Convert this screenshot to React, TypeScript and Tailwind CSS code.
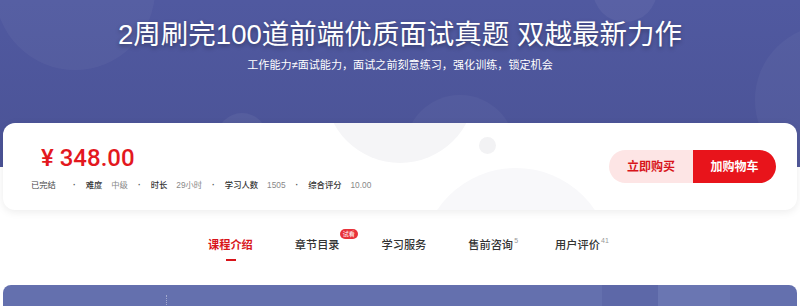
import React from "react"

const font = { fontFamily: '"Liberation Sans", "Noto Sans CJK SC", sans-serif' }

function Meta({ label, value }: { label: string; value: string }) {
  return (
    <span className="flex items-center">
      <span className="text-[#333] font-medium">{label}</span>
      <span className="ml-[9px] text-[#888]">{value}</span>
    </span>
  )
}

function Dot() {
  return <span className="mx-[10px] text-[#555] font-bold">·</span>
}

export default function App() {
  return (
    <div style={font} className="w-[800px] h-[306px] bg-white relative overflow-hidden">
      {/* hero */}
      <div className="relative h-[167px] bg-gradient-to-b from-[#5059a0] to-[#4b5396] overflow-hidden">
        <div className="absolute w-[160px] h-[160px] rounded-full bg-white/[0.04] -left-[5px] -top-[90px]" />
        <div className="absolute w-[64px] h-[64px] rounded-full bg-white/[0.05] left-[593px] -top-[42px]" />
        <div className="absolute w-[150px] h-[150px] rounded-full bg-white/[0.035] left-[755px] top-[25px]" />
        <div className="absolute w-[110px] h-[110px] rounded-full bg-white/[0.035] left-[405px] top-[95px]" />
        <div className="absolute w-[50px] h-[50px] rounded-full bg-white/[0.05] left-[217px] top-[113px]" />
        <div className="relative flex flex-col items-center pt-[18px]">
          <h1 className="text-white text-[27.5px] leading-[34px] [text-shadow:0_2px_4px_rgba(0,0,0,0.35)]">
            2周刷完100道前端优质面试真题 双越最新力作
          </h1>
          <p className="mt-[6px] text-white text-[11.1px] leading-[14px]">
            工作能力≠面试能力，面试之前刻意练习，强化训练，锁定机会
          </p>
        </div>
      </div>

      {/* course card */}
      <div className="relative z-10 -mt-[44px] mx-[3px] h-[87px] rounded-[12px] bg-white shadow-[0_2px_8px_rgba(0,0,0,0.08)] overflow-hidden flex items-center justify-between">
        <div className="absolute w-[150px] h-[150px] rounded-full bg-[#f5f5f7] left-[322px] -top-[110px]" />
        <div className="absolute w-[17px] h-[17px] rounded-full bg-[#f2f2f4] left-[476px] top-[14px]" />
        <div className="absolute w-[190px] h-[190px] rounded-full bg-[#f8f8fa] left-[418px] top-[45px]" />
        <div className="relative pl-[28px] pt-[2px]">
          <div style={{ fontFamily: 'Roboto, "Liberation Sans", sans-serif' }} className="ml-[10px] text-[#e3181e] text-[24px] leading-[28px] font-medium">
            ¥ 348.00
          </div>
          <div className="mt-[7px] flex items-center text-[8.3px] leading-[12px]">
            <span className="text-[#444] mr-[7px]">已完结</span>
            <Dot />
            <Meta label="难度" value="中级" />
            <Dot />
            <Meta label="时长" value="29小时" />
            <Dot />
            <Meta label="学习人数" value="1505" />
            <Dot />
            <Meta label="综合评分" value="10.00" />
          </div>
        </div>
        <div className="relative mr-[21px] flex h-[33px] rounded-full overflow-hidden text-[12px] font-bold">
          <button className="w-[84px] bg-[#fde5e5] text-[#d8141a]">立即购买</button>
          <button className="w-[83px] bg-[#e8141b] text-white">加购物车</button>
        </div>
      </div>

      {/* tabs */}
      <div className="mt-[27px] flex pl-[208px] gap-[42px] text-[11.2px] leading-[16px] font-medium text-[#333]">
        <div className="relative text-[#d8141a] font-bold">
          课程介绍
          <span className="absolute left-[18px] top-[22px] w-[10px] h-[2px] bg-[#d8141a]" />
        </div>
        <div className="relative">
          章节目录
          <span className="absolute left-[45px] -top-[8px] h-[10px] px-[3px] rounded-full bg-[#e8323a] text-white text-[6px] leading-[10px] font-normal whitespace-nowrap">
            试看
          </span>
        </div>
        <div>学习服务</div>
        <div className="relative">
          售前咨询
          <span className="absolute left-[46px] -top-[4px] text-[7px] text-[#999] font-normal">5</span>
        </div>
        <div className="relative">
          用户评价
          <span className="absolute left-[46px] -top-[4px] text-[7px] text-[#999] font-normal">41</span>
        </div>
      </div>

      {/* content section */}
      <div className="absolute left-[3px] right-[3px] top-[285px] h-[30px] rounded-t-[8px] bg-[#6470ae] overflow-hidden">
        <div className="absolute left-[163px] top-[10px] w-[1px] h-[12px] border-l border-dotted border-white/40" />
        <div className="absolute left-[599px] top-0 w-[56px] h-full bg-[#5d68a8]" />
        <div className="absolute left-[655px] top-0 w-[72px] h-full bg-[#6a76b2]" />
      </div>
    </div>
  )
}
